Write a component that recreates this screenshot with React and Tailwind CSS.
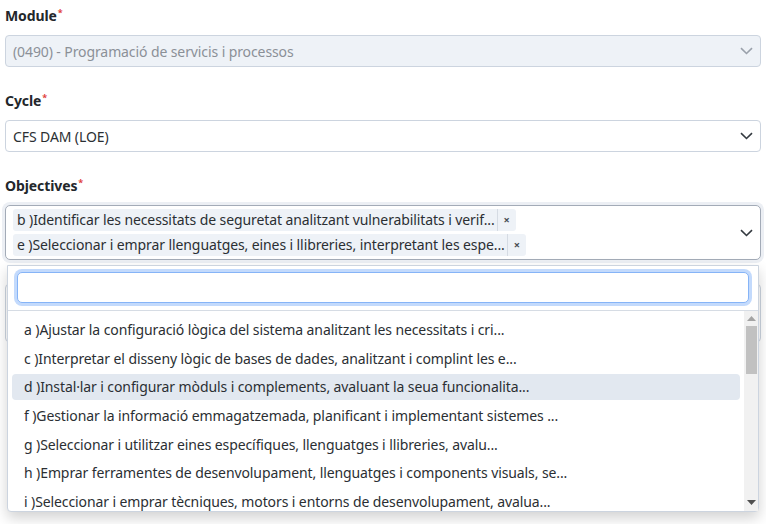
import { useState } from "react";

const font = { fontFamily: '"Noto Sans", "Open Sans", sans-serif' };

const options = [
  "a )Ajustar la configuració lògica del sistema analitzant les necessitats i cri...",
  "c )Interpretar el disseny lògic de bases de dades, analitzant i complint les e...",
  "d )Instal·lar i configurar mòduls i complements, avaluant la seua funcionalita...",
  "f )Gestionar la informació emmagatzemada, planificant i implementant sistemes ...",
  "g )Seleccionar i utilitzar eines específiques, llenguatges i llibreries, avalu...",
  "h )Emprar ferramentes de desenvolupament, llenguatges i components visuals, se...",
  "i )Seleccionar i emprar tècniques, motors i entorns de desenvolupament, avalua...",
];

const selected = [
  "b )Identificar les necessitats de seguretat analitzant vulnerabilitats i verif...",
  "e )Seleccionar i emprar llenguatges, eines i llibreries, interpretant les espe...",
];

function Chevron({ light }) {
  return (
    <svg width="13" height="8" viewBox="0 0 13 8" fill="none">
      <path
        d="M1 1.2 L6.5 6.5 L12 1.2"
        stroke={light ? "#9aa1ab" : "#343a40"}
        strokeWidth="1.6"
      />
    </svg>
  );
}

function Label({ children }) {
  return (
    <div className="h-[20px] mb-[9px] text-[14px] font-bold text-[#23272b] leading-[20px] tracking-[-0.1px]">
      {children}
      <span className="text-[#e0413b] text-[9px] align-top relative top-[-3px] ml-[1px]">*</span>
    </div>
  );
}

export default function App() {
  const [hover] = useState(2);
  return (
    <div className="w-[766px] h-[524px] bg-white overflow-hidden px-[5px] pt-[6px] text-[#2b2f33] tracking-[-0.1px]" style={font}>
      <Label>Module</Label>
      <div className="h-[32px] rounded-[4px] border border-[#ccd4df] bg-[#eef2f7] flex items-center justify-between pl-[7px] pr-[7px] text-[14px] text-[#8b9097]">
        <span>(0490) - Programació de servicis i processos</span>
        <Chevron light />
      </div>

      <div className="h-[24px]" />
      <Label>Cycle</Label>
      <div className="h-[32px] rounded-[4px] border border-[#ccd4df] bg-white flex items-center justify-between pl-[7px] pr-[7px] text-[14px]">
        <span>CFS DAM (LOE)</span>
        <Chevron />
      </div>

      <div className="h-[24px]" />
      <Label>Objectives</Label>
      <div className="relative">
        <div className="rounded-[5px] border border-[#a3abb7] bg-white shadow-[0_0_0_3px_#eceff4] flex items-center justify-between pl-[7px] pr-[7px] py-[3px] text-[14px]">
          <div className="flex flex-col gap-[3px] items-start">
            {selected.map((s) => (
              <div key={s} className="flex items-center h-[22px] rounded-[3px] bg-[#eef2f7] leading-[22px]">
                <span className="pl-[4px] pr-[2px]">{s}</span>
                <span className="h-full border-l border-[#d5dbe3] px-[6px] text-[11px] font-bold text-[#4a4f55] flex items-center">×</span>
              </div>
            ))}
          </div>
          <Chevron />
        </div>

        <div className="h-[24px]" />
        <div className="h-[58px] rounded-[4px] border border-[#ccd4df]" />

        <div className="absolute left-[2px] right-[2px] top-[60px] h-[247px] bg-white border border-[#ccd4df] rounded-b-[4px] shadow-[0_6px_14px_rgba(0,0,0,0.18)] flex flex-col">
          <div className="px-[9px] pt-[6px] pb-[7px] border-b border-[#d6dce4]">
            <div className="h-[31px] rounded-[5px] border border-[#86b4f7] shadow-[0_0_0_3px_#c3dafc] bg-white" />
          </div>
          <div className="flex-1 flex min-h-0">
            <div className="flex-1 pl-[4px] pr-[4px] pt-[6px] flex flex-col gap-[2.7px] overflow-hidden">
              {options.map((o, i) => (
                <div
                  key={o}
                  className={
                    "h-[26px] shrink-0 leading-[26px] pl-[12px] rounded-[4px] text-[14px] whitespace-nowrap " +
                    (i === hover ? "bg-[#e2e8f0]" : "")
                  }
                >
                  {o}
                </div>
              ))}
            </div>
            <div className="w-[14px] bg-[#f1f1f1] flex flex-col items-center pt-[5px] pb-[6px] relative">
              <svg width="9" height="5" viewBox="0 0 9 5"><path d="M0 5 L4.5 0 L9 5 Z" fill="#a3a3a3" /></svg>
              <div className="w-[11px] h-[48px] bg-[#c1c1c1] mt-[5px]" />
              <div className="flex-1" />
              <svg width="9" height="5" viewBox="0 0 9 5"><path d="M0 0 L4.5 5 L9 0 Z" fill="#505050" /></svg>
            </div>
          </div>
        </div>
      </div>
    </div>
  );
}
